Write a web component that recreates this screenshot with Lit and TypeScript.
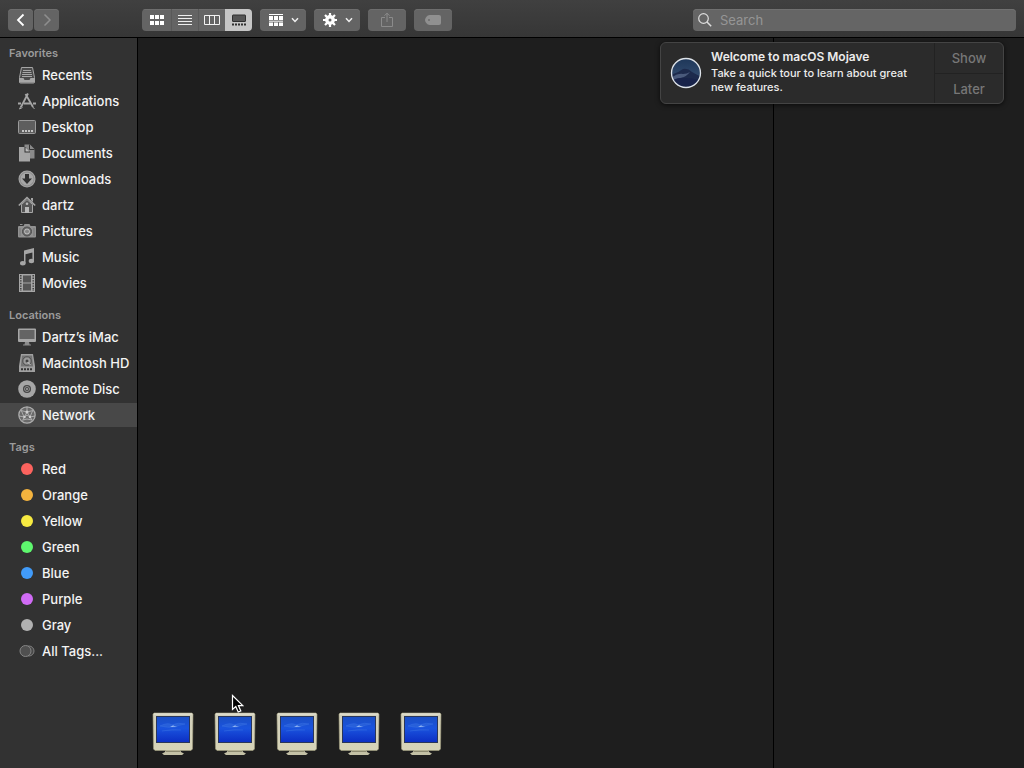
import { LitElement, html, css, svg, nothing } from "lit";
import { customElement, property, state } from "lit/decorators.js";
import { classMap } from "lit/directives/class-map.js";
import { styleMap } from "lit/directives/style-map.js";

type Glyph = ReturnType<typeof svg>;

const sidebarGlyphs: Record<string, Glyph> = {
  recents: svg`
    <path d="M3.500 1.500h11l2 10v4.500a1 1 0 0 1-1 1h-13a1 1 0 0 1-1-1v-4.500z" fill="#4a4a4a" stroke="#a6a6a6"/>
    <path d="M5 4.500h8M4.500 6.500h9M4 8.500h10M4 10.500h10" stroke="#a6a6a6"/>
    <path d="M1.500 12h4l1 2h5l1-2h4v4.500h-15z" fill="#a6a6a6"/>`,
  applications: svg`
    <path d="M10 1.500 3 15M7.500 2l7.500 13" fill="none" stroke="#a6a6a6" stroke-width="1.800"/>
    <path d="M0 11.500h3M6 11.500h6.500M15 11.500h3" stroke="#a6a6a6" stroke-width="1.800"/>
    <path d="M3 14 1.500 17 4.500 15.500M14 14l2.500 3" stroke="#a6a6a6" fill="none"/>`,
  desktop: svg`
    <rect x=".5" y="2.500" width="17" height="13" rx="1" fill="#5e5e5e" stroke="#9a9a9a"/>
    <path d="M4 13h2M7 13h2M10 13h2M13 13h2" stroke="#c4c4c4" stroke-width="2"/>`,
  documents: svg`
    <path d="M6.500 .5H12L16.500 5v9.500H12V7.500L7.500 3h-1z" fill="#8a8a8a"/>
    <path d="M11.500 .5v5h5" fill="none" stroke="#343434"/>
    <path d="M1 3h5.500v5.500H12V17.500H1z" fill="#a6a6a6"/>
    <path d="M7.500 3.200v4.300h4.300z" fill="#bcbcbc"/>`,
  downloads: svg`
    <circle cx="9" cy="9" r="8.500" fill="#a6a6a6"/>
    <circle cx="9" cy="9" r="7" fill="none" stroke="#8a8a8a"/>
    <path d="M7 4h4v4.500h3L9 14 4 8.500h3z" fill="#303030"/>`,
  home: svg`
    <path d="M.8 9.500 9 1.500l8.200 8" fill="none" stroke="#a6a6a6" stroke-width="1.600"/>
    <path d="M13 2h2v4l-2-2z" fill="#a6a6a6"/>
    <path d="M3.500 8.500V16.500h11V8.500L9 3.500z" fill="#555" stroke="#a6a6a6"/>
    <circle cx="9" cy="7.800" r="1.300" fill="#b8b8b8"/>
    <path d="M7 11h4v6H7z" fill="#b8b8b8"/>`,
  pictures: svg`
    <path d="M5.500 4l1-2h5l1 2H17a1 1 0 0 1 1 1v9.500a1 1 0 0 1-1 1H1a1 1 0 0 1-1-1V5a1 1 0 0 1 1-1z" fill="#929292"/>
    <path d="M2 2.500h2.500" stroke="#929292"/>
    <circle cx="9" cy="9.500" r="4.500" fill="#6c6c6c" stroke="#4c4c4c"/>
    <circle cx="9" cy="9.500" r="2.500" fill="#858585" stroke="#c0c0c0"/>
    <path d="M2 6v8M16 6v8" stroke="#777"/>`,
  music: svg`
    <path d="M6 2.500 16 0v12.500h-1.600V4.500L7.500 6.200V15H6z" fill="#a6a6a6"/>
    <ellipse cx="4.800" cy="15.200" rx="2.800" ry="2.200" fill="#a6a6a6"/>
    <ellipse cx="13.400" cy="13" rx="2.700" ry="2.200" fill="#a6a6a6"/>`,
  movies: svg`
    <path d="M1 0h16v18H1z" fill="#a6a6a6"/>
    <path d="M5 1.500h8v7H5zM5 9.500h8v7H5z" fill="#555"/>
    <path d="M2.800 1v16M15.200 1v16" stroke="#383838" stroke-width="1.400" stroke-dasharray="1.400 1.200"/>`,
  imac: svg`
    <path d="M1 .5h16a1 1 0 0 1 1 1V13a1 1 0 0 1-1 1H1a1 1 0 0 1-1-1V1.500a1 1 0 0 1 1-1z" fill="#a6a6a6"/>
    <path d="M1.500 2h15v9h-15z" fill="#646464"/>
    <path d="M7 14h4l.6 2.500H13v1H5v-1h1.500z" fill="#8c8c8c"/>`,
  disk: svg`
    <path d="M3 0h12L17 12v6H1V12z" fill="#a0a0a0"/>
    <path d="M4 1.500h10l1.200 11H2.800z" fill="#747474"/>
    <circle cx="9" cy="7" r="4.200" fill="#9a9a9a" stroke="#4d4d4d"/>
    <circle cx="9" cy="7" r="1.500" fill="#424242"/>
    <path d="M12.500 11 9.500 8" stroke="#ccc"/>
    <path d="M3 15.200h12" stroke="#343434" stroke-width="2" stroke-dasharray="2 1"/>`,
  disc: svg`
    <circle cx="9" cy="9" r="8.800" fill="#a6a6a6"/>
    <circle cx="9" cy="9" r="4" fill="#454545"/>
    <circle cx="9" cy="9" r="2.500" fill="none" stroke="#919191"/>
    <circle cx="9" cy="9" r="1" fill="#a6a6a6"/>`,
  network: svg`
    <circle cx="9" cy="9" r="8.200" fill="#6a6a6a" stroke="#adadad" stroke-width="1.200"/>
    <path d="M9 1v5M3 4.500 9 6l6-1.500M9 6 4.500 14.500M9 6l5 8M1 10l5.500 1L9 9l3 2 5-1M5 14l4-1 5 1M3.500 5 6 11M14.500 5 12 11" fill="none" stroke="#bdbdbd" stroke-width=".8"/>
    <circle cx="9" cy="6" r="1.500" fill="#cfcfcf"/><circle cx="6.500" cy="11" r="1.200" fill="#cfcfcf"/>
    <circle cx="12" cy="11" r="1.200" fill="#cfcfcf"/>`,
  alltags: svg`
    <circle cx="11" cy="9" r="5" fill="#484848" stroke="#808080"/>
    <circle cx="7.500" cy="9" r="5.500" fill="#505050" stroke="#858585"/>`,
};

interface Entry {
  label: string;
  icon?: string;
  color?: string;
}

const sections: { title: string; entries: Entry[] }[] = [
  {
    title: "Favorites",
    entries: [
      { label: "Recents", icon: "recents" },
      { label: "Applications", icon: "applications" },
      { label: "Desktop", icon: "desktop" },
      { label: "Documents", icon: "documents" },
      { label: "Downloads", icon: "downloads" },
      { label: "dartz", icon: "home" },
      { label: "Pictures", icon: "pictures" },
      { label: "Music", icon: "music" },
      { label: "Movies", icon: "movies" },
    ],
  },
  {
    title: "Locations",
    entries: [
      { label: "Dartz’s iMac", icon: "imac" },
      { label: "Macintosh HD", icon: "disk" },
      { label: "Remote Disc", icon: "disc" },
      { label: "Network", icon: "network" },
    ],
  },
  {
    title: "Tags",
    entries: [
      { label: "Red", color: "#fc635e" },
      { label: "Orange", color: "#f4b33e" },
      { label: "Yellow", color: "#f7ea41" },
      { label: "Green", color: "#5ef76e" },
      { label: "Blue", color: "#419bf9" },
      { label: "Purple", color: "#d06bf5" },
      { label: "Gray", color: "#b1b1b1" },
      { label: "All Tags...", icon: "alltags" },
    ],
  },
];

@customElement("finder-sidebar")
class FinderSidebar extends LitElement {
  @property() selected = "Network";

  static styles = css`
    :host { display: block; }
    .section { padding-bottom: 10px; }
    .title {
      margin: 0; padding: 0 9px; font-size: 11px; line-height: 20px;
      font-weight: 600; color: #9b9b9b;
    }
    .list { list-style: none; margin: 0; padding: 0; display: grid; gap: 2px; }
    .row {
      display: flex; align-items: center; gap: 6px; height: 24px; padding-left: 18px;
      color: #f4f4f4; font-size: 13px; font-weight: 500; text-decoration: none; white-space: nowrap;
    }
    .row.selected { background: #484848; }
    .icon { width: 18px; height: 18px; flex: none; }
    .dot { width: 12px; height: 12px; margin: 0 3px; border-radius: 50%; flex: none; }
  `;

  render() {
    return html`<nav aria-label="Sidebar">
      ${sections.map(
        (s) => html`<section class="section">
          <h2 class="title">${s.title}</h2>
          <ul class="list">
            ${s.entries.map(
              (e) => html`<li>
                <a
                  href="#"
                  class=${classMap({ row: true, selected: e.label === this.selected })}
                  @click=${(ev: Event) => {
                    ev.preventDefault();
                    this.selected = e.label;
                  }}
                >
                  ${e.color
                    ? html`<span class="dot" style=${styleMap({ background: e.color })}></span>`
                    : html`<svg class="icon" viewBox="0 0 18 18" aria-hidden="true">${sidebarGlyphs[e.icon!]}</svg>`}
                  <span>${e.label}</span>
                </a>
              </li>`
            )}
          </ul>
        </section>`
      )}
    </nav>`;
  }
}

const views: { name: string; glyph: Glyph }[] = [
  {
    name: "Icons",
    glyph: svg`<path d="M1 2h4v4H1zM6 2h4v4H6zM11 2h4v4h-4zM1 8h4v4H1zM6 8h4v4H6zM11 8h4v4h-4z" fill="#fff"/>`,
  },
  {
    name: "List",
    glyph: svg`<path d="M1 2.500h14M1 5.500h14M1 8.500h14M1 11.500h14" stroke="#eee"/>`,
  },
  {
    name: "Columns",
    glyph: svg`<path d="M.5 2.500h15v9H.5zM5.500 2.500v9M10.500 2.500v9" fill="none" stroke="#f2f2f2"/>`,
  },
  {
    name: "Gallery",
    glyph: svg`<rect x="1.500" y="2" width="13" height="6.500" rx=".5" fill="#555" stroke="#303030"/>
      <path d="M1 11.500h2M4 11.500h2M7 11.500h2M10 11.500h2M13 11.500h2" stroke="#303030" stroke-width="2"/>`,
  },
];

@customElement("finder-toolbar")
class FinderToolbar extends LitElement {
  @state() private view = "Gallery";

  static styles = css`
    :host {
      display: flex; align-items: center; gap: 8px; height: 37px; padding: 2px 8px 0; box-sizing: border-box;
      background: linear-gradient(#404040, #363636);
    }
    button {
      display: flex; align-items: center; justify-content: center; height: 22px; padding: 0;
      border: 0; border-radius: 4px; background: #646464; box-shadow: inset 0 1px #6e6e6e;
    }
    .nav { display: flex; gap: 1px; margin-right: 75px; }
    .nav button { width: 25px; }
    .views { display: flex; border-radius: 4px; overflow: hidden; }
    .views button { width: 26px; border-radius: 0; border-left: 1px solid #595959; box-sizing: content-box; }
    .views button:first-child { border-left: 0; width: 29px; }
    .views button.on { background: #c6c6c6; box-shadow: none; border-left-color: #c6c6c6; }
    .menu { width: 46px; gap: 7px; }
    .single { width: 38px; }
    .g16 { width: 16px; height: 14px; flex: none; }
    .chev { width: 8px; height: 6px; flex: none; }
    .search {
      display: flex; align-items: center; gap: 8px; height: 22px; padding: 0 5px;
      flex: 0 1 313px; margin-left: auto; border-radius: 4px;
      background: #656565; box-shadow: inset 0 1px #707070;
    }
    .search svg { width: 14px; height: 14px; flex: none; }
    .search input {
      flex: 1; min-width: 0; padding: 0; border: 0; outline: 0; background: none;
      font: inherit; font-size: 13px; line-height: 22px; color: #fff;
    }
    .search input::placeholder { color: #959595; opacity: 1; }
  `;

  private chevron() {
    return html`<svg class="chev" viewBox="0 0 8 6" aria-hidden="true">
      <path d="M1 1.200 4 4.400 7 1.200" fill="none" stroke="#f0f0f0" stroke-width="1.500" />
    </svg>`;
  }

  render() {
    return html`
      <div class="nav">
        <button aria-label="Back">
          <svg class="g16" viewBox="0 0 16 14"><path d="M10.500 1.500 5 7l5.500 5.500" fill="none" stroke="#fff" stroke-width="1.800"/></svg>
        </button>
        <button aria-label="Forward" disabled>
          <svg class="g16" viewBox="0 0 16 14"><path d="M5.500 1.500 11 7l-5.500 5.500" fill="none" stroke="#8e8e8e" stroke-width="1.500"/></svg>
        </button>
      </div>
      <div class="views" role="group" aria-label="View">
        ${views.map(
          (v) => html`<button
            aria-label=${v.name}
            aria-pressed=${v.name === this.view}
            class=${v.name === this.view ? "on" : nothing}
            @click=${() => (this.view = v.name)}
          ><svg class="g16" viewBox="0 0 16 14">${v.glyph}</svg></button>`
        )}
      </div>
      <button class="menu" aria-label="Group">
        <svg class="g16" viewBox="0 0 16 14">
          <path d="M1 1.500h14M1 8.200h14" stroke="#fff"/>
          <path d="M1 3h4v4H1zM6 3h4v4H6zM11 3h4v4h-4zM1 9.500h4V13H1zM6 9.500h4V13H6zM11 9.500h4V13h-4z" fill="#fff"/>
        </svg>
        ${this.chevron()}
      </button>
      <button class="menu" aria-label="Action">
        <svg class="g16" viewBox="0 0 16 14">
          <path d="M8 0v14M1 7h14M3 2l10 10M13 2 3 12" stroke="#fff" stroke-width="2.200"/>
          <circle cx="8" cy="7" r="3.200" fill="#646464" stroke="#fff" stroke-width="3.400"/>
        </svg>
        ${this.chevron()}
      </button>
      <button class="single" aria-label="Share" disabled>
        <svg class="g16" viewBox="0 0 16 14">
          <path d="M6 4.500H2.500v9h11v-9H10M8 9V0M5.500 2.700 8 .2l2.500 2.500" fill="none" stroke="#8b8b8b"/>
        </svg>
      </button>
      <button class="single" aria-label="Tags" disabled>
        <svg class="g16" viewBox="0 0 16 14">
          <path d="M4.500 2H14a2 2 0 0 1 2 2v6a2 2 0 0 1-2 2H4.500C2.500 12 0 9 0 7s2.500-5 4.500-5z" fill="#909090"/>
          <circle cx="4" cy="7" r="1" fill="#6b6b6b"/>
        </svg>
      </button>
      <label class="search">
        <svg viewBox="0 0 14 14" aria-hidden="true">
          <circle cx="5.500" cy="5.500" r="4.800" fill="none" stroke="#dedede" stroke-width="1.200"/>
          <path d="M9 9l4.200 4.200" stroke="#dedede" stroke-width="1.500"/>
        </svg>
        <input type="text" placeholder="Search" aria-label="Search" />
      </label>
    `;
  }
}

@customElement("crt-icon")
class CrtIcon extends LitElement {
  static styles = css`
    :host { display: block; width: 42px; height: 44px; }
    svg { display: block; width: 100%; height: 100%; }
  `;

  render() {
    return html`<svg viewBox="0 0 42 44" role="img" aria-label="Windows PC">
      <defs>
        <linearGradient id="case" x1="0" y1="0" x2="0" y2="1">
          <stop offset="0" stop-color="#d2d0bc"/><stop offset="1" stop-color="#d6d3b8"/>
        </linearGradient>
        <linearGradient id="tube" x1="0" y1="0" x2="0" y2="1">
          <stop offset="0" stop-color="#1a4fc4"/><stop offset=".45" stop-color="#1a53de"/><stop offset="1" stop-color="#0c2fc4"/>
        </linearGradient>
      </defs>
      <path d="M14 37h14l1 3 3 1.500-2 1.500H12l-2-1.500 3-1.500z" fill="#c4c1a6"/>
      <path d="M14 39.500h14" stroke="#8d8a70"/>
      <path d="M2 1h38l1 1-.5 35-1.500 1.500H3L1.500 37 1 2z" fill="url(#case)" stroke="#a39f80" stroke-width=".6"/>
      <path d="M2 2h38" stroke="#e6e4d6"/>
      <path d="M4 4h34v27H4z" fill="#2a3658"/>
      <path d="M5 5h32v25H5z" fill="url(#tube)"/>
      <path d="M8 14q8-4 12-1 6-3 13-1-6 1-10 3-7 1-15-1zM10 19q10-2 19-1" fill="#3068dc" stroke="#447ee8" stroke-width=".6" opacity=".6"/>
      <path d="M18 15l3-1.500 4 1.500-3-.4z" fill="#c3dcff"/>
    </svg>`;
  }
}

@customElement("welcome-notice")
class WelcomeNotice extends LitElement {
  static styles = css`
    :host {
      display: grid; grid-template-columns: 32px 1fr 69px; column-gap: 9px; align-items: center;
      padding-left: 9px; box-sizing: border-box; border: 1px solid #444; border-radius: 6px;
      background: #2b2b2b; box-shadow: 0 1px 5px #000a;
    }
    .badge { display: block; width: 32px; height: 32px; }
    .text { align-self: start; padding-top: 5px; color: #ececec; font-size: 11px; line-height: 14px; }
    .title { margin: 0; font-size: 12px; line-height: 18px; font-weight: 600; }
    .body { margin: 0; font-weight: 500; }
    .actions { align-self: stretch; display: grid; grid-template-rows: 1fr 1fr; border-left: 1px solid #222; }
    button {
      border: 0; padding: 0; background: none; color: #777; font: inherit; font-size: 13px; font-weight: 500;
    }
    button + button { border-top: 1px solid #222; }
  `;

  render() {
    return html`
      <svg class="badge" viewBox="0 0 32 32" aria-hidden="true">
        <defs>
          <clipPath id="round"><circle cx="16" cy="16" r="14"/></clipPath>
          <linearGradient id="night" x1="0" y1="0" x2="0" y2="1">
            <stop offset="0" stop-color="#1c3557"/><stop offset="1" stop-color="#3f587c"/>
          </linearGradient>
        </defs>
        <g clip-path="url(#round)">
          <path d="M0 0h32v32H0z" fill="url(#night)"/>
          <path d="M0 18Q8 16 13 12q5-1 9 3 5 3 10 5v12H0z" fill="#1d2a4c"/>
          <path d="M1 21q7-5 12-4 4 0 7-2-4 5-9 6-5 2-10 3z" fill="#4a5a7c"/>
          <path d="M0 24q9-4 15-3 8 0 17 3v8H0z" fill="#18234a"/>
        </g>
        <circle cx="16" cy="16" r="14.500" fill="none" stroke="#dde3ea" stroke-width="1.300"/>
      </svg>
      <div class="text">
        <h3 class="title">Welcome to macOS Mojave</h3>
        <p class="body">Take a quick tour to learn about great new features.</p>
      </div>
      <div class="actions"><button>Show</button><button>Later</button></div>
    `;
  }
}

@customElement("app-root")
class AppRoot extends LitElement {
  static styles = css`
    :host {
      display: grid; grid-template: auto 1fr / 137px 1fr 250px; min-height: 100vh; position: relative;
      background: #1e1e1e; font-family: Inter, "Liberation Sans", sans-serif; overflow: hidden;
    }
    .toolbar { grid-column: 1 / -1; border-bottom: 1px solid #000; }
    .sidebar { padding-top: 5px; background: #323232; }
    .gallery {
      display: flex; align-items: flex-end; gap: 20px; padding: 0 14px 12px;
      border-left: 1px solid #000; border-right: 1px solid #000;
    }
    .notice { position: absolute; top: 42px; right: 20px; width: 344px; height: 62px; }
    .cursor { position: absolute; left: 231px; top: 694px; width: 13px; height: 20px; }
  `;

  render() {
    return html`
      <div class="toolbar"><finder-toolbar></finder-toolbar></div>
      <finder-sidebar class="sidebar"></finder-sidebar>
      <main class="gallery">${[1, 2, 3, 4, 5].map(() => html`<crt-icon></crt-icon>`)}</main>
      <aside aria-label="Preview"></aside>
      <welcome-notice class="notice" role="alert"></welcome-notice>
      <svg class="cursor" viewBox="0 0 13 20" aria-hidden="true">
        <path d="M1.500 1.500v14l3.300-3 2.400 5.500 2.600-1-2.400-5.400h4.400z" fill="#000" stroke="#fff" stroke-width="1.200"/>
      </svg>
    `;
  }
}
